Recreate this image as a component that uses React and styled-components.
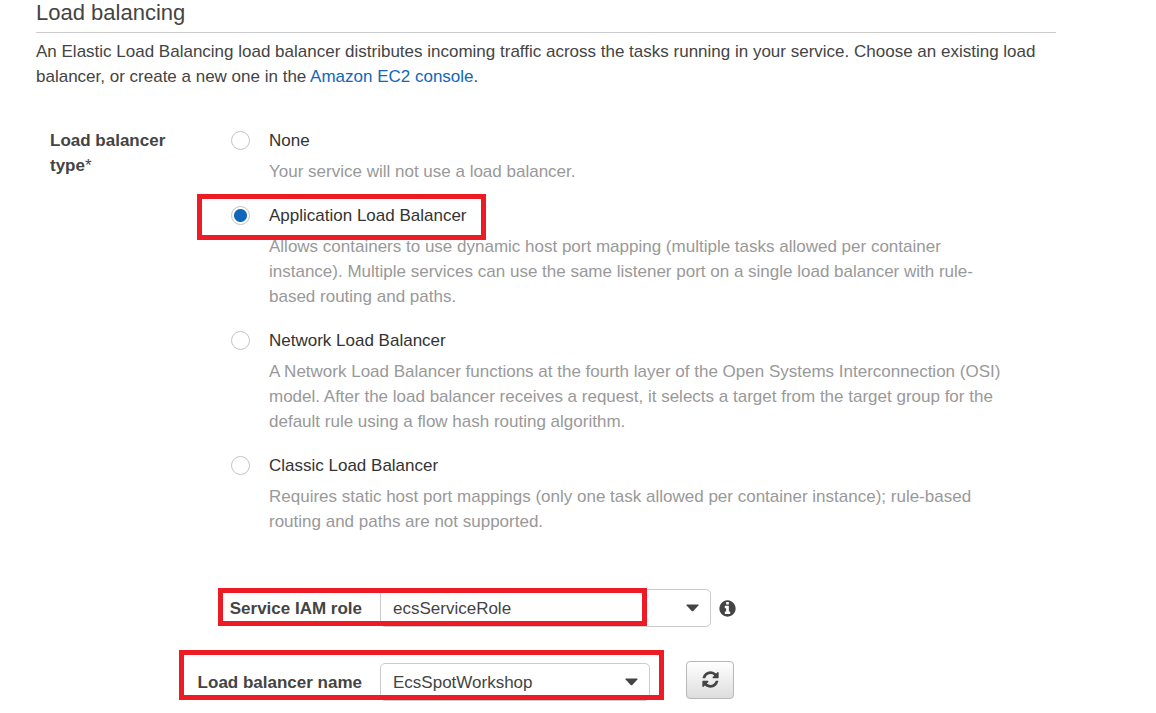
import React, { useState } from "react";
import styled, { createGlobalStyle } from "styled-components";

const GlobalStyle = createGlobalStyle`
  *, *::before, *::after { box-sizing: border-box; }
  body {
    margin: 0;
    background: #fff;
    color: #444;
    font-family: "Liberation Sans", Arial, sans-serif;
    font-size: 17px;
    line-height: 25px;
  }
`;

const Page = styled.main`
  padding: 0 100px 12px 36px;
`;

const Heading = styled.h2`
  margin: 0 0 6px;
  padding-bottom: 7px;
  border-bottom: 1px solid #ccc;
  font-size: 22px;
  line-height: 25px;
  font-weight: 400;
`;

const Intro = styled.p`
  margin: 0;
`;

const Link = styled.a`
  color: #1166bb;
  text-decoration: none;
`;

const TypeField = styled.fieldset`
  display: grid;
  grid-template-columns: 181px minmax(0, 1fr);
  margin: 39px 0 0;
  padding: 0 50px 0 14px;
  border: 0;
`;

const TypeLabel = styled.div`
  padding-right: 40px;
  font-weight: 700;
`;

const Required = styled.span`
  font-weight: 400;
`;

const Options = styled.div`
  display: flex;
  flex-direction: column;
  gap: 19px;
`;

const Option = styled.div`
  display: grid;
  grid-template-columns: 19px minmax(0, 1fr);
  column-gap: 19px;
  row-gap: 6px;
  position: relative;
`;

const Radio = styled.input`
  appearance: none;
  width: 19px;
  height: 19px;
  margin: 3px 0 0;
  border: 1px solid #c4c4c4;
  border-radius: 50%;
  background: #fff;

  &:checked {
    background: radial-gradient(circle, #1166bb 6px, #fff 7px);
  }
`;

const OptionLabel = styled.label`
  color: #333;
`;

const Description = styled.p`
  grid-column: 2;
  margin: 0;
  color: #999;
`;

const Highlight = styled.span`
  position: absolute;
  top: ${(p) => p.$top}px;
  left: ${(p) => p.$left}px;
  width: ${(p) => p.$width}px;
  height: ${(p) => p.$height}px;
  border: 5px solid #ed1c24;
  pointer-events: none;
  z-index: 1;
`;

const Fields = styled.div`
  display: flex;
  flex-direction: column;
  gap: 36px;
  margin-top: 55px;
`;

const FieldRow = styled.div`
  display: flex;
  align-items: center;
  position: relative;
`;

const FieldLabel = styled.label`
  width: 326px;
  margin-right: 18px;
  text-align: right;
  font-weight: 700;
`;

const SelectWrap = styled.div`
  position: relative;
  width: ${(p) => p.$width}px;
`;

const Select = styled.select`
  appearance: none;
  display: block;
  width: 100%;
  height: 38px;
  padding: 0 40px 0 12px;
  border: 1px solid #ccc;
  border-radius: 5px;
  background: #fff;
  color: #444;
  font: inherit;
`;

const Caret = styled.svg`
  position: absolute;
  top: 15px;
  right: 12px;
  width: 13px;
  height: 8px;
  fill: #444;
  pointer-events: none;
`;

const InfoButton = styled.button`
  display: flex;
  margin-left: 7px;
  padding: 0;
  border: 0;
  background: none;
  color: #444;
`;

const RefreshButton = styled.button`
  display: flex;
  align-items: center;
  justify-content: center;
  width: 48px;
  height: 38px;
  margin: -4px 0 0 36px;
  padding: 0 0 2px;
  border: 1px solid #b8b8b8;
  border-radius: 4px;
  background: linear-gradient(#fff, #ddd);
  color: #444;
`;

const Icon = styled.svg`
  width: ${(p) => p.$size}px;
  height: ${(p) => p.$size}px;
  fill: currentColor;
`;

const INFO_PATH =
  "M1152 1376v-160q0-14-9-23t-23-9h-96v-512q0-14-9-23t-23-9h-320q-14 0-23 9t-9 23v160q0 14 9 23t23 9h96v320h-96q-14 0-23 9t-9 23v160q0 14 9 23t23 9h448q14 0 23-9t9-23zm-128-896v-160q0-14-9-23t-23-9h-192q-14 0-23 9t-9 23v160q0 14 9 23t23 9h192q14 0 23-9t9-23zm640 416q0 209-103 385.5t-279.5 279.5-385.5 103-385.5-103-279.5-279.5-103-385.5 103-385.5 279.5-279.5 385.5-103 385.5 103 279.5 279.5 103 385.5z";
const REFRESH_PATH =
  "M1639 1056q0 5-1 7-64 268-268 434.5t-478 166.5q-146 0-282.5-55t-243.5-157l-129 129q-19 19-45 19t-45-19-19-45v-448q0-26 19-45t45-19h448q26 0 45 19t19 45-19 45l-137 137q71 66 161 102t187 36q134 0 250-65t186-179q11-17 53-117 8-23 30-23h192q13 0 22.5 9.5t9.5 22.5zm25-800v448q0 26-19 45t-45 19h-448q-26 0-45-19t-19-45 19-45l138-138q-148-137-349-137-134 0-250 65t-186 179q-11 17-53 117-8 23-30 23h-199q-13 0-22.5-9.5t-9.5-22.5v-7q65-268 270-434.5t480-166.5q146 0 284 55.5t245 156.5l130-129q19-19 45-19t45 19 19 45z";

const OPTIONS = [
  { id: "none", label: "None", text: "Your service will not use a load balancer." },
  {
    id: "application",
    label: "Application Load Balancer",
    text: "Allows containers to use dynamic host port mapping (multiple tasks allowed per container instance). Multiple services can use the same listener port on a single load balancer with rule-based routing and paths.",
    highlight: true,
  },
  {
    id: "network",
    label: "Network Load Balancer",
    text: "A Network Load Balancer functions at the fourth layer of the Open Systems Interconnection (OSI) model. After the load balancer receives a request, it selects a target from the target group for the default rule using a flow hash routing algorithm.",
  },
  {
    id: "classic",
    label: "Classic Load Balancer",
    text: "Requires static host port mappings (only one task allowed per container instance); rule-based routing and paths are not supported.",
  },
];

function Dropdown({ id, width, value }) {
  return (
    <SelectWrap $width={width}>
      <Select id={id} defaultValue={value}>
        <option>{value}</option>
      </Select>
      <Caret viewBox="0 0 13 8" aria-hidden="true">
        <path d="M1 0.5h11q1 0.3 0.4 1L7.3 7q-0.8 0.7-1.6 0L0.6 1.5Q0 0.8 1 0.5z" />
      </Caret>
    </SelectWrap>
  );
}

export default function App() {
  const [type, setType] = useState("application");

  return (
    <Page>
      <GlobalStyle />
      <Heading>Load balancing</Heading>
      <Intro>
        An Elastic Load Balancing load balancer distributes incoming traffic across the tasks
        running in your service. Choose an existing load balancer, or create a new one in
        the <Link href="#ec2-console">Amazon EC2 console</Link>.
      </Intro>

      <TypeField aria-labelledby="type-label">
        <TypeLabel id="type-label">
          Load balancer type<Required>*</Required>
        </TypeLabel>
        <Options>
          {OPTIONS.map((o) => (
            <Option key={o.id}>
              <Radio
                type="radio"
                name="lb-type"
                id={o.id}
                checked={type === o.id}
                onChange={() => setType(o.id)}
              />
              <OptionLabel htmlFor={o.id}>{o.label}</OptionLabel>
              <Description>{o.text}</Description>
              {o.highlight && <Highlight $top={-9} $left={-34} $width={289} $height={46} />}
            </Option>
          ))}
        </Options>
      </TypeField>

      <Fields>
        <FieldRow>
          <FieldLabel htmlFor="iam-role">Service IAM role</FieldLabel>
          <Dropdown id="iam-role" width={331} value="ecsServiceRole" />
          <InfoButton type="button" aria-label="About the service IAM role">
            <Icon $size={19} viewBox="0 0 1792 1792" aria-hidden="true">
              <path d={INFO_PATH} />
            </Icon>
          </InfoButton>
          <Highlight $top={-1} $left={182} $width={429} $height={38} />
        </FieldRow>
        <FieldRow>
          <FieldLabel htmlFor="lb-name">Load balancer name</FieldLabel>
          <Dropdown id="lb-name" width={270} value="EcsSpotWorkshop" />
          <RefreshButton type="button" aria-label="Refresh load balancers">
            <Icon $size={19} viewBox="0 0 1792 1792" aria-hidden="true">
              <path d={REFRESH_PATH} />
            </Icon>
          </RefreshButton>
          <Highlight $top={-13} $left={143} $width={485} $height={50} />
        </FieldRow>
      </Fields>
    </Page>
  );
}
